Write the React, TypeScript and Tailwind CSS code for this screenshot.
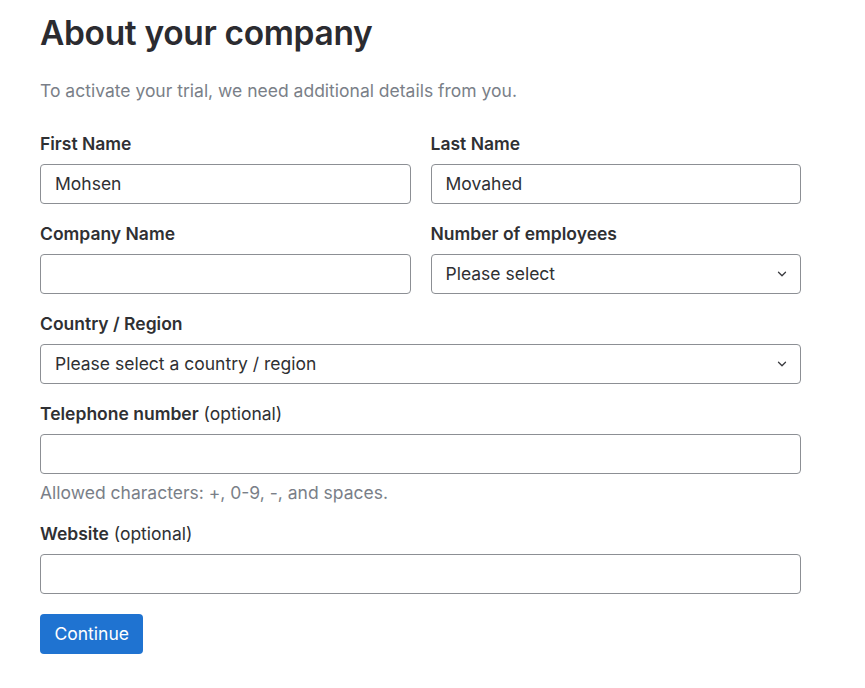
import { ChevronDown } from 'lucide-react';

function Label({ text, optional }: { text: string; optional?: boolean }) {
  return (
    <label className="block text-[17.5px] font-semibold leading-[26px] text-[#2f3033]">
      {text}
      {optional ? <span className="font-normal"> (optional)</span> : null}
    </label>
  );
}

function TextInput({ value }: { value?: string }) {
  return (
    <div className="mt-[7px] flex h-10 items-center rounded-[4px] border border-[#8c8f94] bg-white px-[14px] text-[17.5px] text-[#2f3033]">
      {value}
    </div>
  );
}

function Select({ placeholder }: { placeholder: string }) {
  return (
    <div className="mt-[7px] flex h-10 items-center justify-between rounded-[4px] border border-[#8c8f94] bg-white pl-[14px] pr-[11px] text-[17.5px] text-[#2f3033]">
      <span>{placeholder}</span>
      <ChevronDown size={14} strokeWidth={2.2} className="text-[#3a3b3f]" />
    </div>
  );
}

export default function App() {
  return (
    <div className="min-h-screen bg-white font-['Inter',sans-serif]">
      <div className="w-[801px] pl-10 pt-[13px]">
        <h1 className="text-[33.5px] font-semibold leading-[40px] tracking-[-0.01em] text-[#2b2b30]">
          About your company
        </h1>
        <p className="mt-[25px] text-[17.5px] leading-[26px] text-[#7a7f88]">
          To activate your trial, we need additional details from you.
        </p>

        <div className="mt-[27px] grid grid-cols-2 gap-x-5 gap-y-[17px]">
          <div>
            <Label text="First Name" />
            <TextInput value="Mohsen" />
          </div>
          <div>
            <Label text="Last Name" />
            <TextInput value="Movahed" />
          </div>
          <div>
            <Label text="Company Name" />
            <TextInput />
          </div>
          <div>
            <Label text="Number of employees" />
            <Select placeholder="Please select" />
          </div>
          <div className="col-span-2">
            <Label text="Country / Region" />
            <Select placeholder="Please select a country / region" />
          </div>
          <div className="col-span-2">
            <Label text="Telephone number" optional />
            <TextInput />
            <p className="mb-[-1px] mt-[7px] text-[17.5px] leading-6 text-[#7a7f88]">
              Allowed characters: +, 0-9, -, and spaces.
            </p>
          </div>
          <div className="col-span-2">
            <Label text="Website" optional />
            <TextInput />
          </div>
        </div>

        <button className="mt-5 h-10 rounded-[4px] bg-[#1f73d1] px-[14.5px] text-[17.5px] text-white">
          Continue
        </button>
      </div>
    </div>
  );
}
